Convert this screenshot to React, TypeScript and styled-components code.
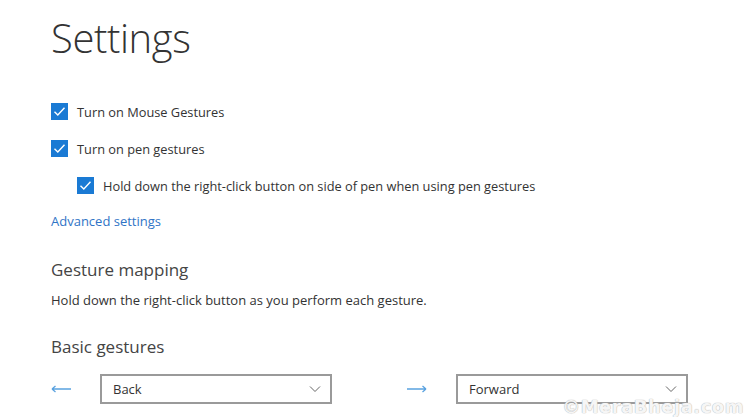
import styled, { createGlobalStyle } from "styled-components";

const GlobalStyle = createGlobalStyle`
  html, body {
    margin: 0;
    padding: 0;
    background: #ffffff;
  }
  body {
    font-family: "Open Sans", "Noto Sans", sans-serif;
    color: #2b2b2b;
  }
`;

const Page = styled.div`
  position: relative;
  width: 744px;
  height: 417px;
  overflow: hidden;
  box-sizing: border-box;
  padding: 12px 0 0 51px;
`;

const Title = styled.h1`
  margin: 0;
  font-size: 40px;
  font-weight: 300;
  line-height: 52px;
  color: #333;
  letter-spacing: -0.4px;
`;

const Options = styled.div`
  display: flex;
  flex-direction: column;
  gap: 20px;
  margin-top: 39px;
`;

const CheckRow = styled.label<{ $indent?: boolean }>`
  display: flex;
  align-items: center;
  gap: 9px;
  height: 17px;
  padding-left: ${(p) => (p.$indent ? "26px" : "0")};
  font-size: 12.8px;
  color: #333;
`;

const Box = styled.span`
  width: 17px;
  height: 17px;
  background: #1a7ad4;
  display: flex;
  align-items: center;
  justify-content: center;
  flex-shrink: 0;
`;

const Link = styled.a`
  display: block;
  margin-top: 18px;
  font-size: 13px;
  color: #2f74c6;
  text-decoration: none;
`;

const Heading = styled.h2<{ $top: number }>`
  margin: ${(p) => p.$top}px 0 0;
  font-size: 17px;
  font-weight: 400;
  color: #444;
  line-height: 22px;
`;

const Description = styled.p`
  margin: 10px 0 0;
  font-size: 13px;
  color: #333;
`;

const GestureRow = styled.div`
  display: flex;
  align-items: center;
  margin-top: 16px;
`;

const Arrow = styled.span`
  width: 49px;
  display: flex;
  align-items: center;
  flex-shrink: 0;
`;

const Select = styled.div<{ $gap?: number }>`
  width: 232px;
  height: 30px;
  box-sizing: border-box;
  border: 2px solid #9a9a9a;
  display: flex;
  align-items: center;
  justify-content: space-between;
  padding: 0 9px 0 11px;
  font-size: 13px;
  color: #333;
  margin-right: ${(p) => p.$gap ?? 0}px;
`;

const Watermark = styled.div`
  position: absolute;
  right: 0;
  bottom: 0;
  font-family: "DejaVu Sans", sans-serif;
  font-weight: bold;
  font-size: 18px;
  line-height: 20px;
  color: rgba(255, 255, 255, 0.9);
  text-shadow: 0 0 1px #b8b8b8, 0 0 1px #b8b8b8;
  letter-spacing: 0.5px;
`;

function Check() {
  return (
    <Box>
      <svg width="13" height="13" viewBox="0 0 13 13">
        <path d="M1.5 6.8 L4.8 10 L11.5 2.8" fill="none" stroke="#fff" strokeWidth="1.4" />
      </svg>
    </Box>
  );
}

function Chevron() {
  return (
    <svg width="12" height="8" viewBox="0 0 12 8">
      <path d="M1 1.5 L6 6.5 L11 1.5" fill="none" stroke="#666" strokeWidth="1" />
    </svg>
  );
}

function LineArrow({ left }: { left?: boolean }) {
  return (
    <svg width="20" height="8" viewBox="0 0 20 8">
      {left ? (
        <path d="M1 4 H20 M1 4 L4.5 1 M1 4 L4.5 7" fill="none" stroke="#5aa2e0" strokeWidth="1.3" />
      ) : (
        <path d="M0 4 H19 M19 4 L15.5 1 M19 4 L15.5 7" fill="none" stroke="#5aa2e0" strokeWidth="1.3" />
      )}
    </svg>
  );
}

export default function App() {
  return (
    <>
      <GlobalStyle />
      <Page>
        <Title>Settings</Title>
        <Options>
          <CheckRow>
            <Check />
            Turn on Mouse Gestures
          </CheckRow>
          <CheckRow>
            <Check />
            Turn on pen gestures
          </CheckRow>
          <CheckRow $indent>
            <Check />
            Hold down the right-click button on side of pen when using pen gestures
          </CheckRow>
        </Options>
        <Link href="#">Advanced settings</Link>
        <Heading $top={29}>Gesture mapping</Heading>
        <Description>Hold down the right-click button as you perform each gesture.</Description>
        <Heading $top={27}>Basic gestures</Heading>
        <GestureRow>
          <Arrow>
            <LineArrow left />
          </Arrow>
          <Select $gap={75}>
            Back
            <Chevron />
          </Select>
          <Arrow>
            <LineArrow />
          </Arrow>
          <Select>
            Forward
            <Chevron />
          </Select>
        </GestureRow>
        <Watermark>©MeraBheja.com</Watermark>
      </Page>
    </>
  );
}
